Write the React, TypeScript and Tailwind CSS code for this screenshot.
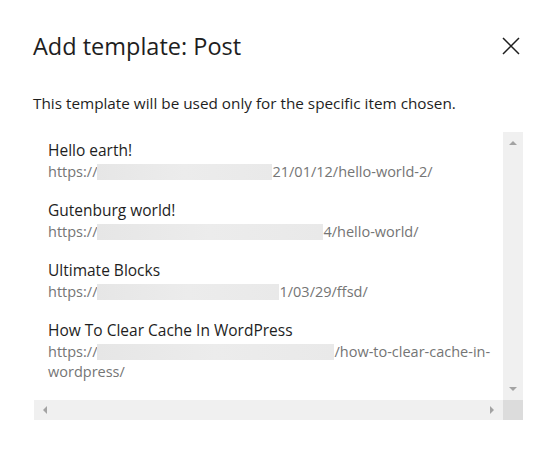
const items = [
  { title: 'Hello earth!', pre: 'https://', box: 175, post: '21/01/12/hello-world-2/' },
  { title: 'Gutenburg world!', pre: 'https://', box: 226, post: '4/hello-world/' },
  { title: 'Ultimate Blocks', pre: 'https://', box: 182, post: '1/03/29/ffsd/' },
  { title: 'How To Clear Cache In WordPress', pre: 'https://', box: 237, post: '/how-to-clear-cache-in-', tail: 'wordpress/' },
];

function Redact({ w }: { w: number }) {
  return (
    <span
      className="inline-block h-[16px] align-[-3px] bg-gradient-to-r from-[#e6e6e6] via-[#ececec] to-[#e9e9e9]"
      style={{ width: w }}
    />
  );
}

function Tri({ dir }: { dir: 'up' | 'down' | 'left' | 'right' }) {
  const pts = {
    up: '0,5 4,1 8,5',
    down: '0,1 4,5 8,1',
    left: '5,0 1,4 5,8',
    right: '1,0 5,4 1,8',
  }[dir];
  const vertical = dir === 'up' || dir === 'down';
  return (
    <svg width={vertical ? 8 : 6} height={vertical ? 6 : 8} viewBox={vertical ? '0 0 8 6' : '0 0 6 8'}>
      <polygon points={pts} fill="#a3a3a3" />
    </svg>
  );
}

export default function App() {
  return (
    <div className="w-[560px] h-[458px] bg-white text-[#1e1e1e] font-['Open_Sans','Noto_Sans',sans-serif]">
      <div className="flex items-start justify-between pl-[33px] pr-[39px] pt-[30px]">
        <h1 className="text-[23.5px] leading-[32px] text-[#1e1e1e]">Add template: Post</h1>
        <button className="mt-[6px] text-[#1e1e1e]">
          <svg width="20" height="20" viewBox="0 0 20 20" fill="none" stroke="currentColor" strokeWidth="1.5">
            <path d="M2 2 L18 18 M18 2 L2 18" />
          </svg>
        </button>
      </div>
      <p className="pl-[33px] mt-[31px] text-[15.3px] leading-[20px] text-[#1e1e1e]">
        This template will be used only for the specific item chosen.
      </p>
      <div className="ml-[34px] mt-[19px] w-[489px] h-[288px] flex flex-col">
        <div className="flex flex-1 min-h-0">
          <div className="flex-1 pl-[14px] pt-[8px] flex flex-col gap-[18px] overflow-hidden">
            {items.map((it) => (
              <div key={it.title} className="leading-[21px]">
                <div className="text-[15.5px] text-[#1e1e1e]">{it.title}</div>
                <div className="text-[14.5px] text-[#757575] whitespace-nowrap">
                  {it.pre}
                  <Redact w={it.box} />
                  {it.post}
                </div>
                {it.tail && <div className="text-[14.5px] leading-[19px] text-[#757575]">{it.tail}</div>}
              </div>
            ))}
          </div>
          <div className="w-[20px] bg-[#f0f0f0] flex flex-col items-center justify-between py-[8px]">
            <Tri dir="up" />
            <Tri dir="down" />
          </div>
        </div>
        <div className="flex h-[20px]">
          <div className="flex-1 bg-[#f0f0f0] flex items-center justify-between px-[8px]">
            <Tri dir="left" />
            <Tri dir="right" />
          </div>
          <div className="w-[20px] bg-[#dcdcdc]" />
        </div>
      </div>
    </div>
  );
}
